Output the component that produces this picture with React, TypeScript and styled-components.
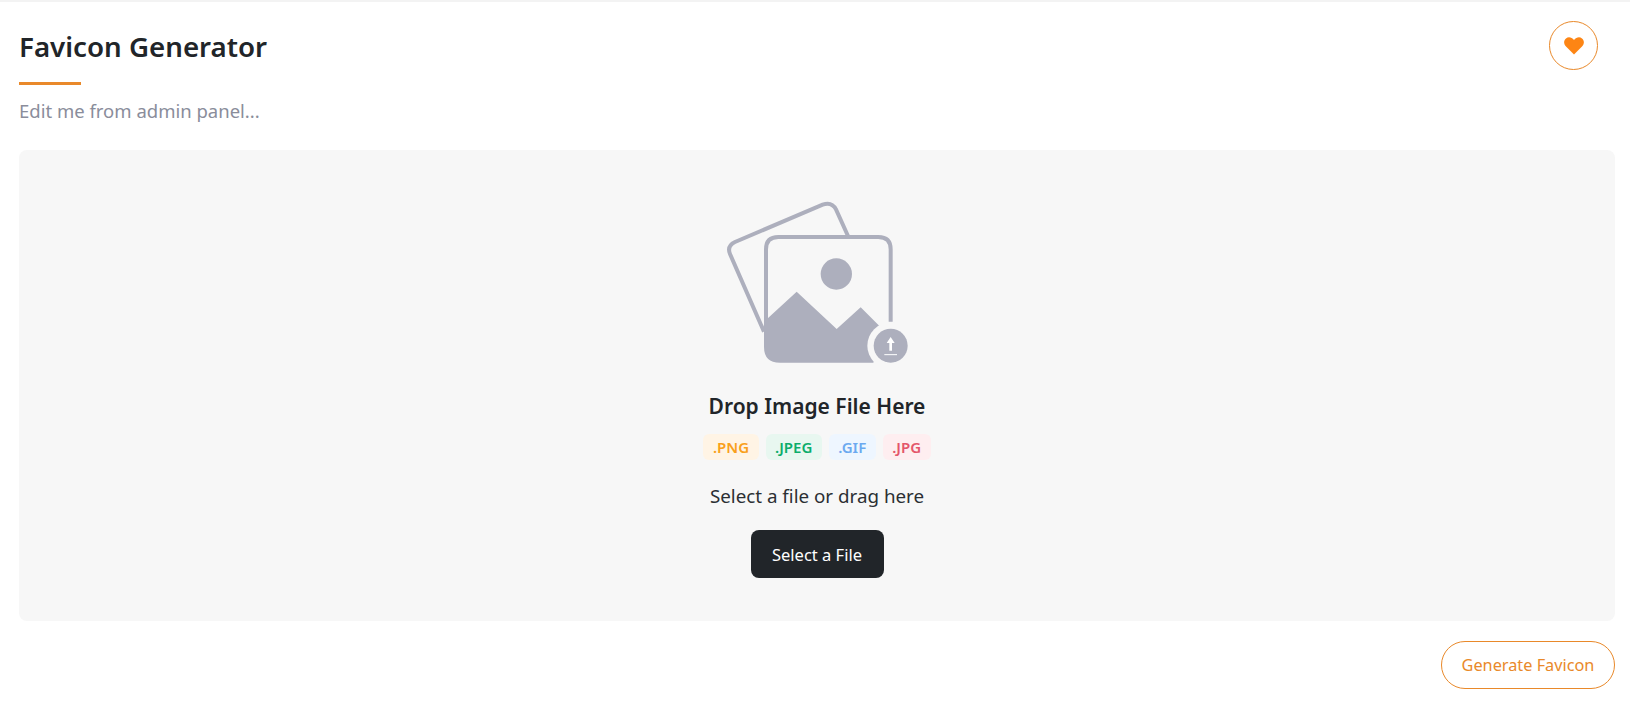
import React from 'react';
import styled, { createGlobalStyle } from 'styled-components';

const GlobalStyle = createGlobalStyle`
  html, body {
    margin: 0;
    background: #fff;
    font-family: "Noto Sans", "Open Sans", sans-serif;
    color: #212529;
  }
`;

const Page = styled.main`
  border-top: 2px solid #f3f3f3;
  padding: 19px 15px 21px 19px;
  height: 710px;
  box-sizing: border-box;
`;

const Header = styled.header`
  display: flex;
  justify-content: space-between;
  align-items: flex-start;
  padding-right: 17px;
`;

const Title = styled.h1`
  margin: 6px 0 0;
  font-size: 27.7px;
  line-height: 38px;
  font-weight: 600;
  color: #212529;
`;

const Rule = styled.div`
  width: 62px;
  height: 3px;
  margin-top: 17px;
  background: #e9892a;
`;

const Subtitle = styled.p`
  margin: 13px 0 0;
  font-size: 18.5px;
  line-height: 26px;
  color: #8a8d9b;
`;

const HeartButton = styled.button`
  width: 49px;
  height: 49px;
  padding: 0;
  border: 1px solid #e9892a;
  border-radius: 50%;
  background: #fff;
  display: flex;
  align-items: center;
  justify-content: center;
`;

const DropZone = styled.section`
  margin-top: 26px;
  height: 471px;
  box-sizing: border-box;
  padding-top: 40px;
  border-radius: 8px;
  background: #f7f7f7;
  display: flex;
  flex-direction: column;
  align-items: center;
`;

const DropTitle = styled.h2`
  margin: 11px 0 0;
  font-size: 21px;
  line-height: 30px;
  font-weight: 600;
`;

const Chips = styled.div`
  display: flex;
  gap: 7px;
  margin-top: 13px;
`;

const Chip = styled.span<{ $bg: string; $fg: string }>`
  height: 26px;
  padding: 0 9.5px;
  border-radius: 6px;
  background: ${p => p.$bg};
  color: ${p => p.$fg};
  font-size: 15px;
  font-weight: 600;
  line-height: 26px;
`;

const Hint = styled.p`
  margin: 22px 0 0;
  font-size: 18.8px;
  line-height: 28px;
  color: #2b2f33;
`;

const SelectButton = styled.button`
  width: 133px;
  height: 48px;
  margin-top: 20px;
  border: none;
  border-radius: 8px;
  background: #212529;
  color: #fff;
  font: 400 16.5px "Noto Sans", "Open Sans", sans-serif;
`;

const Footer = styled.div`
  display: flex;
  justify-content: flex-end;
  margin-top: 20px;
`;

const GenerateButton = styled.button`
  width: 174px;
  height: 48px;
  border: 1px solid #e9892a;
  border-radius: 24px;
  background: #fff;
  color: #e9892a;
  font: 400 16.3px "Noto Sans", "Open Sans", sans-serif;
`;

const UploadArt = () => (
  <svg width="230" height="190" viewBox="6 0 690 570" fill="none">
    <path d="M192 425 L90 192 Q80 168 105 156 L368 44 Q395 34 408 58 L444 138" stroke="#adafbd" strokeWidth="12" />
    <path d="M198 410 V178 Q198 141 235 141 H535 Q572 141 572 178 V395" stroke="#adafbd" strokeWidth="12" />
    <circle cx="409" cy="252" r="47" fill="#adafbd" />
    <path d="M192 395 L290 305 L410 417 L482 352 L560 430 L520 518 H240 Q192 518 192 470 Z" fill="#adafbd" />
    <circle cx="572" cy="467" r="70" fill="#f7f7f7" />
    <circle cx="572" cy="467" r="51" fill="#adafbd" />
    <path d="M572 441 L584 459 H576 V482 H568 V459 H560 Z" fill="#fff" />
    <path d="M553 494 H591" stroke="#fff" strokeWidth="3" />
  </svg>
);

const chips = [
  { label: '.PNG', bg: '#fff4e5', fg: '#f9a01b' },
  { label: '.JPEG', bg: '#e8f7f0', fg: '#0cad6b' },
  { label: '.GIF', bg: '#eef6ff', fg: '#6ba9f0' },
  { label: '.JPG', bg: '#feeef0', fg: '#e4566a' },
];

export default function App() {
  return (
    <>
      <GlobalStyle />
      <Page>
        <Header>
          <div>
            <Title>Favicon Generator</Title>
            <Rule />
            <Subtitle>Edit me from admin panel...</Subtitle>
          </div>
          <HeartButton aria-label="Favourite">
            <svg width="20" height="18" viewBox="0 0 20 18">
              <path d="M10 17.5 L2 9.6 C-0.6 7 -0.4 3.2 2 1.4 C4.4 -0.4 7.6 0.1 10 3 C12.4 0.1 15.6 -0.4 18 1.4 C20.4 3.2 20.6 7 18 9.6 Z" fill="#fd8514" />
            </svg>
          </HeartButton>
        </Header>
        <DropZone>
          <UploadArt />
          <DropTitle>Drop Image File Here</DropTitle>
          <Chips>
            {chips.map(c => (
              <Chip key={c.label} $bg={c.bg} $fg={c.fg}>{c.label}</Chip>
            ))}
          </Chips>
          <Hint>Select a file or drag here</Hint>
          <SelectButton>Select a File</SelectButton>
        </DropZone>
        <Footer>
          <GenerateButton>Generate Favicon</GenerateButton>
        </Footer>
      </Page>
    </>
  );
}
